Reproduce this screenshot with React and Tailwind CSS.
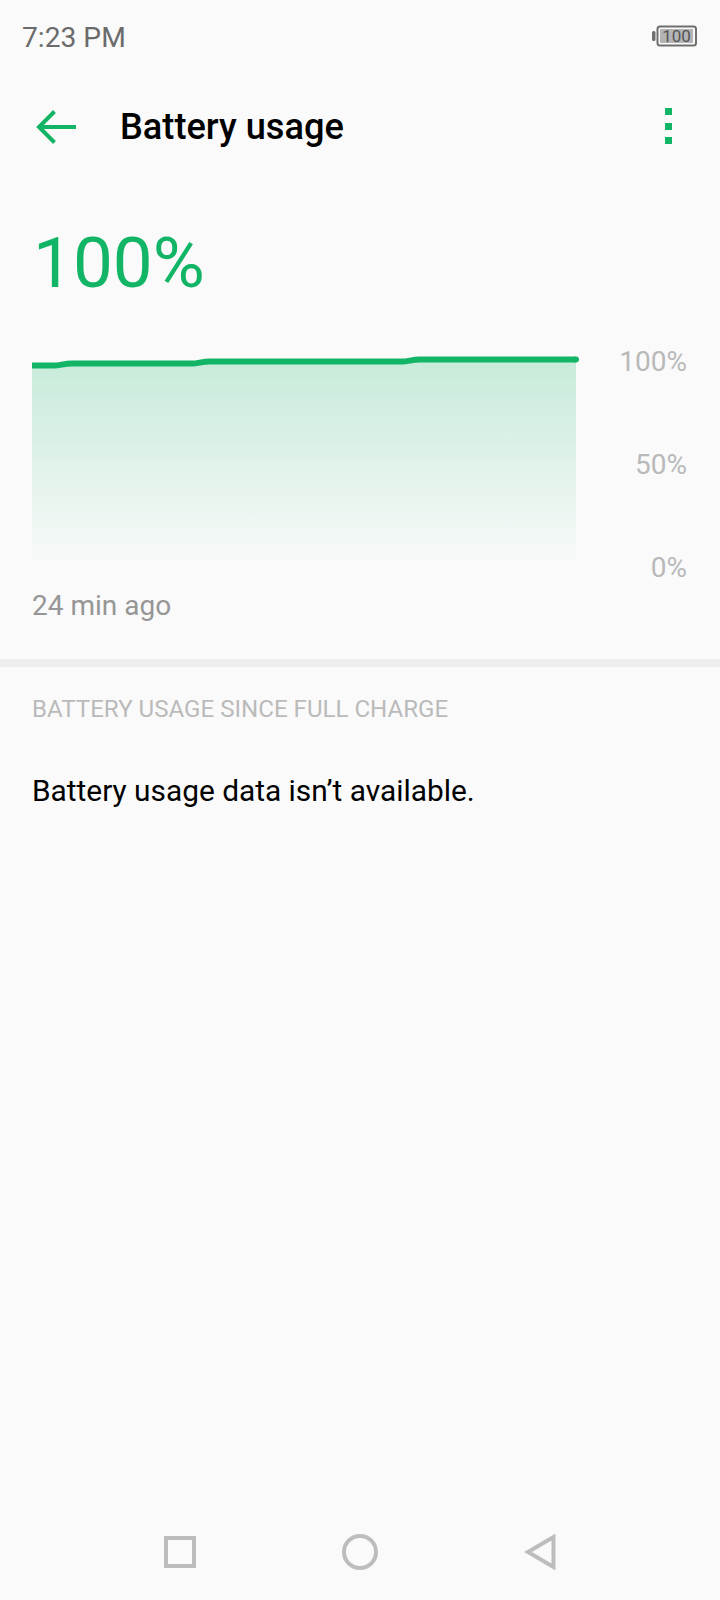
export default function App() {
  return (
    <div className="w-[720px] h-[1600px] bg-[#fafafa] flex flex-col font-['Roboto',sans-serif]">
      <div className="h-[74px] pl-[22px] pr-[23px] flex items-center justify-between">
        <span className="mt-[2px] text-[28.2px] leading-[32px] text-[#6b6b6b]">7:23 PM</span>
        <svg width="45" height="22" viewBox="0 0 45 22" className="block mb-[3px]">
          <rect x="0" y="6" width="3.5" height="10" rx="1.5" fill="#6f6f6f" />
          <rect x="5.5" y="1.5" width="38.5" height="19" rx="2.5" fill="none" stroke="#6f6f6f" strokeWidth="2" />
          <rect x="8" y="4" width="33" height="14" fill="#b4b4b4" />
          <text x="24.5" y="17" textAnchor="middle" fontSize="17" fontFamily="Roboto" fill="#555555">100</text>
        </svg>
      </div>
      <div className="mt-[26px] h-[54px] pl-[36px] pr-[48px] flex items-center justify-between">
        <div className="flex items-center">
          <svg width="41" height="36" viewBox="0 0 41 36" className="block">
            <path d="M40 18H3.5M18.5 2.5L3 18l15.5 15.5" fill="none" stroke="#12b566" strokeWidth="4" />
          </svg>
          <span className="ml-[43px] text-[36.2px] leading-[40px] font-medium text-black">Battery usage</span>
        </div>
        <div className="flex flex-col gap-[7.5px] mb-[2px]">
          <div className="w-[7px] h-[7px] bg-[#12b566]" />
          <div className="w-[7px] h-[7px] bg-[#12b566]" />
          <div className="w-[7px] h-[7px] bg-[#12b566]" />
        </div>
      </div>
      <div className="mt-[66px] pl-[33px] text-[71px] leading-[86px] text-[#12b566]">100%</div>
      <div className="mt-[49px] pl-[32px] flex">
        <svg width="548" height="206" viewBox="0 0 548 206" className="block">
          <defs>
            <linearGradient id="fade" x1="0" y1="0" x2="0" y2="1">
              <stop offset="0" stopColor="#12b566" stopOpacity="0.22" />
              <stop offset="1" stopColor="#12b566" stopOpacity="0.01" />
            </linearGradient>
          </defs>
          <path d="M0 10.5H22C28 10.5 32 8.5 40 8.5H160C166 8.5 170 6.5 178 6.5H370C376 6.5 380 4.5 388 4.5H544V206H0Z" fill="url(#fade)" />
          <path d="M0 10.5H22C28 10.5 32 8.5 40 8.5H160C166 8.5 170 6.5 178 6.5H370C376 6.5 380 4.5 388 4.5H544" fill="none" stroke="#12b566" strokeWidth="6" />
          <circle cx="544" cy="4.5" r="3" fill="#12b566" />
        </svg>
        <div className="ml-[23px] -mt-[8px] w-[84px] h-[236px] flex flex-col justify-between items-end text-[28px] leading-[30px] text-[#b9b9b9]">
          <span>100%</span>
          <span>50%</span>
          <span>0%</span>
        </div>
      </div>
      <div className="mt-[7px] pl-[32px] text-[28px] leading-[32px] text-[#969696]">24 min ago</div>
      <div className="mt-[37px] h-[8px] bg-[#eeeeee]" />
      <div className="mt-[28px] pl-[32px] text-[24.1px] leading-[28px] text-[#bababa]">BATTERY USAGE SINCE FULL CHARGE</div>
      <div className="mt-[50px] pl-[32px] text-[29.85px] leading-[36px] text-black">Battery usage data isn’t available.</div>
      <div className="mt-auto mb-[30px] pl-[164px] pr-[164px] flex items-center justify-between">
        <div className="w-[32px] h-[32px] border-[4px] border-[#bdbdbd]" />
        <div className="w-[36px] h-[36px] rounded-full border-[4px] border-[#bdbdbd]" />
        <svg width="32" height="36" viewBox="0 0 32 36" className="block">
          <path d="M29.5 3V33L4 18Z" fill="none" stroke="#bdbdbd" strokeWidth="4" />
        </svg>
      </div>
    </div>
  );
}
